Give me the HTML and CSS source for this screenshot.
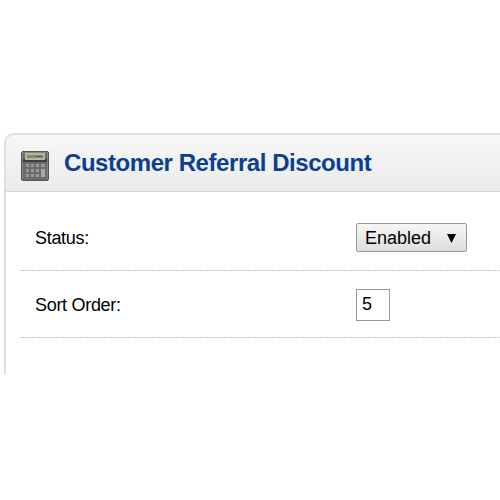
FILE: index.html
```
<!DOCTYPE html>
<html lang="en">
<head>
    <meta charset="UTF-8">
    <meta name="viewport" content="width=device-width, initial-scale=1.0">
    <title>Customer Referral Discount</title>
    <link rel="stylesheet" href="styles.css">
</head>
<body>
    <div class="box">
        <div class="heading">
            <svg class="icon" width="28" height="30" viewBox="0 0 28 30">
                <rect x="0.5" y="0.5" width="27" height="29" rx="1.5" fill="#6c6c6c" stroke="#555"/>
                <path d="M1.5 28V1.5H26.5V28" fill="none" stroke="#858585"/>
                <path d="M4 2H24V9H4z" fill="#b4b5a3"/>
                <path d="M6 4H22V7H6z" fill="#85896a"/>
                <path d="M15 5H21V6H15z" fill="#5b5e47"/>
                <path d="M2 8H4V9H24V8H26V11H2z" fill="#3c3c3c"/>
                <g fill="#999">
                    <path d="M5 13H8V16H5zM10 13H13V16H10zM15 13H18V16H15zM20 13H24V16H20z"/>
                    <path d="M5 18H8V21H5zM10 18H13V21H10zM15 18H18V21H15z"/>
                    <path d="M5 23H8V26H5zM10 23H13V26H10zM15 23H18V26H15z"/>
                    <path d="M20 18H24V26H20z" fill="#a8a8a8"/>
                </g>
            </svg>
            <h1>Customer Referral Discount</h1>
        </div>
        <div class="content">
            <div class="row">
                <label class="name" for="status">Status:</label>
                <div class="field">
                    <button class="select" id="status" type="button">
                        Enabled
                        <svg width="9" height="9" viewBox="0 0 9 9"><path d="M0 0H9L4.5 9z" fill="#000"/></svg>
                    </button>
                </div>
            </div>
            <div class="row">
                <label class="name" for="sort">Sort Order:</label>
                <div class="field">
                    <input class="text" type="text" id="sort" value="5">
                </div>
            </div>
        </div>
    </div>
</body>
</html>
```
FILE: styles.css
```
* {
    box-sizing: border-box;
}

body {
    margin: 0;
    padding-top: 133px;
    height: 500px;
    overflow: hidden;
    background: #fff;
    color: #000;
    font-family: "Liberation Sans", Arial, sans-serif;
    font-size: 18px;
}

.box {
    margin-left: 4px;
    height: 242px;
}

.heading {
    display: flex;
    align-items: flex-start;
    height: 59px;
    padding: 16px 0 0 15px;
    border: 2px solid #dfdfdf;
    border-right: none;
    border-bottom: 1px solid #d6d6d6;
    border-radius: 10px 0 0 0;
    background: linear-gradient(#f7f7f7, #ebebeb);
}

h1 {
    margin: -2px 0 0 15px;
    color: #0a4090;
    font-size: 24px;
    line-height: 28px;
    letter-spacing: -0.44px;
    white-space: nowrap;
}

.content {
    height: 183px;
    padding: 12px 0 0 14px;
    border-left: 2px solid #dfdfdf;
}

.row {
    display: flex;
    height: 67px;
    background: repeating-linear-gradient(90deg, #c4c4c4 0 2px, #f2f2f2 2px 3px) bottom / 100% 1px no-repeat;
}

.name,
.field {
    display: flex;
    align-items: center;
}

.name {
    width: 318px;
    padding-top: 1px;
    padding-left: 15px;
    letter-spacing: -0.3px;
}

.field {
    flex: 1;
    padding-left: 18px;
}

.select {
    display: flex;
    align-items: center;
    justify-content: space-between;
    width: 111px;
    height: 29px;
    padding: 1px 10px 0 8px;
    border: 1px solid #999;
    border-radius: 2px;
    background: linear-gradient(#f6f6f6, #dedede);
    color: #000;
    font: inherit;
}

.text {
    width: 34px;
    height: 32px;
    padding: 0 5px;
    border: 1px solid #999;
    background: #fff;
    color: #000;
    font: inherit;
}
```
